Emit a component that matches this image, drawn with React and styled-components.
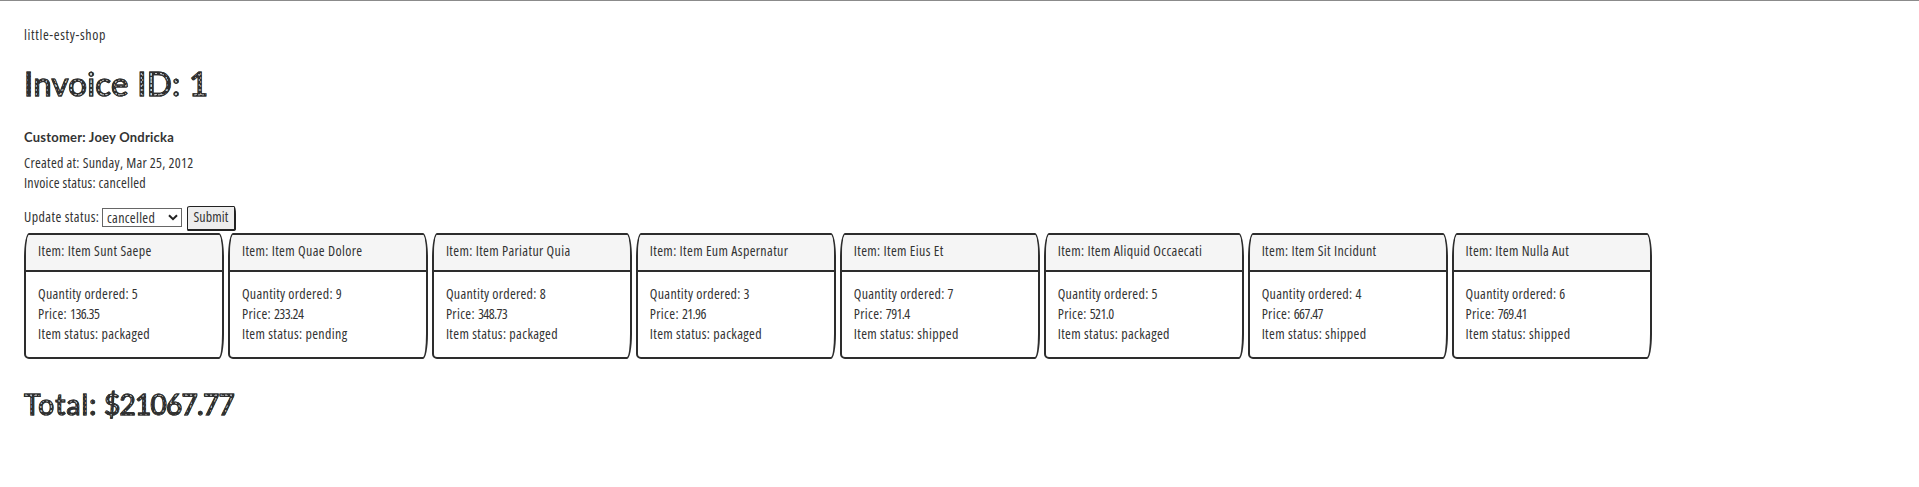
import React from "react";
import styled, { createGlobalStyle } from "styled-components";

const Global = createGlobalStyle`
  *, *::before, *::after { box-sizing: border-box; }
  body {
    margin: 0;
    background: #fff;
    color: #333;
    font: 14px/20px "Open Sans", sans-serif;
    font-stretch: 75%;
  }
`;

const Page = styled.main`
  border-top: 1px solid #8b8b8b;
  padding: 24px 24px 0;
`;

const Brand = styled.div`
  line-height: 20px;
  letter-spacing: 0.64px;
`;

const Sketched = styled.h1`
  margin: ${(p) => p.$margin};
  font: 400 ${(p) => p.$size}px/40px Lato, sans-serif;
  letter-spacing: ${(p) => p.$track}px;
  word-spacing: ${(p) => p.$gap}px;
  color: transparent;
  background:
    radial-gradient(ellipse at 2px 3px, #ddd 0.6px, transparent 1.3px) 0 0 / 5px 4px,
    radial-gradient(ellipse at 3px 2px, #ccc 0.5px, transparent 1.2px) 0 0 / 4px 5px,
    #303030;
  background-clip: text;
  -webkit-background-clip: text;
  -webkit-text-stroke: 1.1px #303030;
`;

const Figure = styled.span`
  letter-spacing: ${(p) => p.$track}px;
`;

const Customer = styled.h2`
  margin: 0 0 6px;
  font: 700 13px/20px Lato, sans-serif;
  letter-spacing: 0.22px;
`;

const Line = styled.p`
  margin: 0;
  line-height: 20px;
  white-space: nowrap;
  letter-spacing: ${(p) => p.$track ?? 0.36}px;
`;

const Amount = styled.span`
  letter-spacing: -0.6px;
`;

const StatusForm = styled.form`
  display: flex;
  align-items: center;
  height: 26px;
  margin: 12px 0 2px;
`;

const Label = styled.label`
  width: 78px;
  padding-bottom: 2px;
  white-space: nowrap;
  letter-spacing: 0.42px;
`;

const Select = styled.div`
  display: flex;
  align-items: center;
  justify-content: space-between;
  width: 80px;
  height: 19px;
  margin: 0 5px 1px 0;
  padding: 0 3px 0 4px;
  border: 1px solid #666;
  line-height: 17px;
  letter-spacing: 0.3px;
`;

const Submit = styled.button`
  width: 49px;
  height: 25px;
  padding: 0 0 2px;
  border: 1px solid #222;
  border-width: 1px 2px 2px 1px;
  border-radius: 3px 2px 3px 1px / 2px 8px 2px 2px;
  background: #ededed;
  color: #333;
  font: inherit;
  letter-spacing: 0.1px;
`;

const Cards = styled.section`
  display: flex;
  gap: 4px;
`;

const Card = styled.article`
  flex: 0 0 199.95px;
  height: 125.5px;
  overflow: hidden;
  border: 2px solid #2d2d2d;
  border-radius: 5px 5px 5px 5px / 25px 25px 25px 5px;
`;

const CardHeader = styled.header`
  height: 37px;
  padding: 6px 12px 0;
  border-bottom: 2px solid #2d2d2d;
  background: #f5f5f5;
`;

const CardBody = styled.div`
  padding: 12px 12px 0;
`;

const items = [
  ["Sunt Saepe", 5, "136.35", "packaged"],
  ["Quae Dolore", 9, "233.24", "pending"],
  ["Pariatur Quia", 8, "348.73", "packaged"],
  ["Eum Aspernatur", 3, "21.96", "packaged"],
  ["Eius Et", 7, "791.4", "shipped"],
  ["Aliquid Occaecati", 5, "521.0", "packaged"],
  ["Sit Incidunt", 4, "667.47", "shipped"],
  ["Nulla Aut", 6, "769.41", "shipped"],
];

export default function App() {
  return (
    <>
      <Global />
      <Page>
        <Brand>little-esty-shop</Brand>
        <Sketched $margin="18px 0 24px" $size={33} $track={0.2} $gap={0}>
          Invoice ID: <Figure $track={0}>1</Figure>
        </Sketched>
        <Customer>Customer: Joey Ondricka</Customer>
        <Line $track={0.28}>Created at: Sunday, Mar 25, 2012</Line>
        <Line $track={0.22}>Invoice status: cancelled</Line>
        <StatusForm>
          <Label>Update status:</Label>
          <Select>
            cancelled
            <svg width="10" height="7" viewBox="0 0 10 7" fill="none" stroke="#222" strokeWidth="2">
              <path d="M1 1.2 5 5.2 9 1.2" />
            </svg>
          </Select>
          <Submit type="button">Submit</Submit>
        </StatusForm>
        <Cards>
          {items.map(([name, quantity, price, status]) => (
            <Card key={name}>
              <CardHeader><Line>Item: Item {name}</Line></CardHeader>
              <CardBody>
                <Line $track={0.3}>Quantity ordered: {quantity}</Line>
                <Line>Price: <Amount>{price}</Amount></Line>
                <Line>Item status: {status}</Line>
              </CardBody>
            </Card>
          ))}
        </Cards>
        <Sketched as="h2" $margin="25.5px 0 0" $size={28} $track={1.2} $gap={-2}>
          Total: <Figure $track={-0.7}>$21067.77</Figure>
        </Sketched>
      </Page>
    </>
  );
}
